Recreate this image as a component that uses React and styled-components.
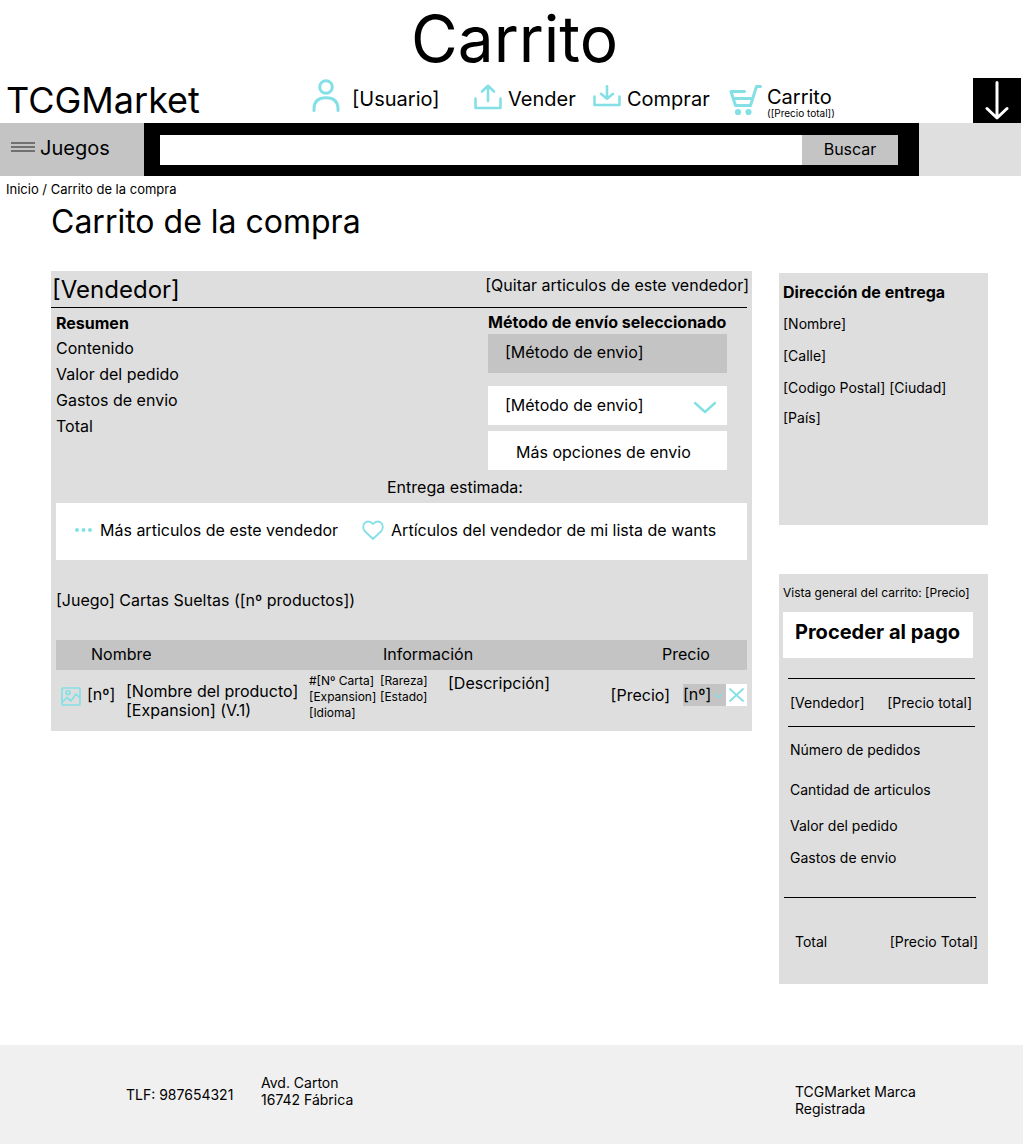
import React from "react";
import styled, { createGlobalStyle } from "styled-components";

const accent = "#85e0e6";
const panel = "#dedede";
const strong = "#c4c4c4";

const GlobalStyle = createGlobalStyle`
  *, *::before, *::after { box-sizing: border-box; }
  body { margin: 0; background: #fff; color: #000; font: 16px/20px Inter, "Liberation Sans", sans-serif; }
  h1, h2, h3, p, ul, address { margin: 0; padding: 0; font-style: normal; }
  h1, h2 { font-weight: 400; }
  ul { list-style: none; }
  a { color: inherit; text-decoration: none; }
  button, input, select { font: inherit; color: inherit; border: 0; border-radius: 0; margin: 0; padding: 0; }
  button { cursor: pointer; }
`;

const Icon = styled.svg`
  display: block;
  flex: none;
  width: ${(p) => p.$w}px;
  height: ${(p) => p.$h}px;
  margin-bottom: ${(p) => p.$lift || 0}px;
  fill: none;
  stroke: ${(p) => p.$color || accent};
  stroke-width: ${(p) => p.$stroke || 3};
  stroke-linecap: round;
  stroke-linejoin: round;
`;

const PageTitle = styled.h1`
  font-size: 64px;
  line-height: 78px;
  text-align: center;
  padding-right: 6px;
`;

const Header = styled.header`
  display: grid;
  grid-template-columns: 312px 1fr 48px;
  grid-template-rows: 45px;
  padding-right: 14px;
`;

const Logo = styled.a`
  padding-left: 6px;
  font-size: 36px;
  line-height: 45px;
`;

const UserNav = styled.nav`
  display: grid;
  grid-template-columns: 162px 119px 136px auto;
  grid-template-rows: 45px;
  justify-content: start;
`;

const NavLink = styled.a`
  display: flex;
  align-items: center;
  gap: ${(p) => p.$gap || 6}px;
  font-size: 20px;
  line-height: 22px;
  white-space: nowrap;
  padding-bottom: 3px;
`;

const CartText = styled.span`
  display: block;
  padding-top: 6px;
`;

const CartTotal = styled.small`
  display: block;
  font-size: 10px;
  line-height: 10px;
`;

const DownButton = styled.button`
  display: grid;
  place-items: center;
  background: #000;
`;

const SearchBar = styled.div`
  display: flex;
  height: 53px;
  margin-right: 14px;
  background: #dfdfdf;
`;

const GamesButton = styled.button`
  display: flex;
  align-items: center;
  gap: 5px;
  width: 144px;
  padding: 0 0 4px 11px;
  background: ${strong};
  font-size: 20px;
`;

const SearchForm = styled.form`
  display: flex;
  flex: 1;
  margin-right: 102px;
  padding: 12px 21px 11px 16px;
  background: #000;
`;

const SearchInput = styled.input`
  flex: 1;
  min-width: 0;
  background: #fff;
  padding: 0 8px;
`;

const SearchButton = styled.button`
  width: 96px;
  padding-bottom: 2px;
  background: ${strong};
`;

const Breadcrumb = styled.nav`
  padding: 3px 6px;
  font-size: 13px;
`;

const Heading = styled.h2`
  padding-left: 51px;
  font-size: 32px;
  line-height: 40px;
`;

const Main = styled.main`
  display: flex;
  align-items: flex-start;
  gap: 27px;
  padding: 29px 47px 61px 51px;
`;

const SellerPanel = styled.section`
  flex: 1;
  min-width: 0;
  padding-right: 5px;
  background: ${panel};
`;

const SellerHeader = styled.div`
  display: flex;
  justify-content: space-between;
  height: 37px;
  border-bottom: 1px solid #000;
`;

const SellerName = styled.h2`
  padding-left: 1px;
  font-size: 24px;
  line-height: 37px;
`;

const TextButton = styled.button`
  height: 28px;
  margin-right: -2px;
  background: none;
`;

const SellerBody = styled.div`
  padding-left: 5px;
`;

const Details = styled.div`
  display: flex;
  justify-content: space-between;
  padding: 3px 20px 0 0;
`;

const BoldTitle = styled.h3`
  font-size: 16px;
  font-weight: 700;
  line-height: ${(p) => p.$line}px;
`;

const SummaryItem = styled.li`
  line-height: 26px;
`;

const Shipping = styled.div`
  width: 239px;
  margin-top: -1px;
`;

const Selected = styled.p`
  height: 39px;
  margin-bottom: 13px;
  padding-left: 17px;
  background: ${strong};
  line-height: 37px;
`;

const SelectWrap = styled.div`
  position: relative;
  width: ${(p) => p.$w};
  height: ${(p) => p.$h}px;
  svg {
    position: absolute;
    top: ${(p) => p.$top}px;
    right: ${(p) => p.$right}px;
    pointer-events: none;
  }
`;

const Select = styled.select`
  appearance: none;
  display: block;
  width: 100%;
  height: 100%;
  padding: 0 0 ${(p) => p.$bottom || 0}px ${(p) => p.$left || 0}px;
  background: ${(p) => p.$bg};
`;

const MoreOptions = styled.button`
  width: 100%;
  height: 39px;
  margin-top: 6px;
  padding: 3px 0 0 28px;
  background: #fff;
  text-align: left;
`;

const Estimate = styled.p`
  padding: 7px 0 6px 331px;
`;

const SellerLinks = styled.nav`
  display: flex;
  align-items: center;
  gap: 24px;
  height: 57px;
  padding: 0 18px 4px;
  background: #fff;
`;

const SellerLink = styled.a`
  display: flex;
  align-items: center;
  gap: 7px;
  white-space: nowrap;
`;

const GroupTitle = styled.p`
  padding: 30px 0;
`;

const Table = styled.table`
  width: 100%;
  table-layout: fixed;
  border-collapse: collapse;
`;

const HeadCell = styled.th`
  width: ${(p) => p.$w || "auto"};
  height: 30px;
  padding: 0 0 2px ${(p) => p.$left}px;
  background: ${strong};
  font-weight: 400;
  text-align: left;
`;

const Cell = styled.td`
  height: 61px;
  padding: 0;
  vertical-align: top;
`;

const Product = styled.div`
  display: flex;
  padding: 12px 0 0 5px;
`;

const Thumb = styled.div`
  padding-top: 5px;
`;

const Count = styled.span`
  width: 39px;
  margin-left: 6px;
  line-height: 24px;
`;

const ProductName = styled.span`
  line-height: 19px;
  white-space: nowrap;
`;

const Info = styled.div`
  display: grid;
  grid-template-columns: 71px 68px 1fr;
  padding-top: 3px;
`;

const Small = styled.p`
  font-size: 12px;
  line-height: 16px;
  white-space: nowrap;
`;

const Price = styled.div`
  display: flex;
  align-items: center;
  justify-content: flex-end;
  padding-top: 14px;
`;

const PriceText = styled.span`
  margin-right: 13px;
`;

const RemoveButton = styled.button`
  display: grid;
  place-items: center;
  width: 21px;
  height: 22px;
  background: #fff;
`;

const Sidebar = styled.aside`
  flex: none;
  width: 209px;
  padding-top: 2px;
  font-size: 14px;
`;

const AddressPanel = styled.section`
  height: 252px;
  margin-bottom: 49px;
  padding: 3px 4px;
  background: ${panel};
`;

const Address = styled.address`
  display: grid;
  grid-template-rows: repeat(3, 32px) 28px;
  align-items: center;
`;

const CartPanel = styled.section`
  padding: 11px 5px 32px 4px;
  background: ${panel};
`;

const PayButton = styled.button`
  width: 190px;
  height: 46px;
  margin: 11px 0 20px;
  padding: 0 0 6px 12px;
  background: #fff;
  font-size: 20px;
  font-weight: 700;
  text-align: left;
  white-space: nowrap;
`;

const SellerTotal = styled.div`
  display: flex;
  justify-content: space-between;
  margin: 0 8px 0 5px;
  padding: 14px 3px 13px 2px;
  border: solid #000;
  border-width: 1px 0;
`;

const Totals = styled.ul`
  display: grid;
  grid-template-rows: 40px 40px 32px 32px;
  align-items: center;
  padding: 3px 7px 23px;
`;

const GrandTotal = styled.div`
  display: flex;
  justify-content: space-between;
  padding: 34px 0 0 11px;
  margin: 0 7px 0 1px;
  border-top: 1px solid #000;
  white-space: nowrap;
`;

const GrandPrice = styled.span`
  margin-right: -2px;
`;

const Footer = styled.footer`
  display: grid;
  grid-template-columns: 135px 1fr 150px;
  align-items: center;
  height: 99px;
  margin-right: 12px;
  padding: 0 78px 0 126px;
  background: #f0f0f0;
  font-size: 14px;
  line-height: 17px;
`;

const FooterText = styled.p`
  padding-top: ${(p) => p.$top || 0}px;
  padding-bottom: ${(p) => p.$bottom || 0}px;
`;

export default function App() {
  return (
    <>
      <GlobalStyle />
      <PageTitle>Carrito</PageTitle>
      <Header>
        <Logo href="#">TCGMarket</Logo>
        <UserNav aria-label="Usuario">
          <NavLink href="#" $gap={12}>
            <Icon $w={28} $h={36} $lift={6} viewBox="0 0 28 36">
              <circle cx="14" cy="9" r="6.3" />
              <path d="M2 32.5V31C2 23.500 6.500 19.800 14 19.800S26 23.500 26 31v1.500" />
            </Icon>
            [Usuario]
          </NavLink>
          <NavLink href="#">
            <Icon $w={28} $h={26} $lift={4} viewBox="0 0 28 26" $stroke={2.6}>
              <path d="M1.5 14.5V24h25V14.500M14 17V2M8 7.5L14 1.8l6 5.7" />
            </Icon>
            Vender
          </NavLink>
          <NavLink href="#">
            <Icon $w={28} $h={26} $lift={4} viewBox="0 0 28 26" $stroke={2.6}>
              <path d="M1.5 12.5V21h25V12.500M14 2.3V14.800M8 9.8l6 5 6-5" />
            </Icon>
            Comprar
          </NavLink>
          <NavLink href="#" $gap={5}>
            <Icon $w={33} $h={34} viewBox="0 0 33 34" $stroke={3}>
              <path d="M15.5 9.500H2L6.500 23.500H21.500L27.500 4.500H31.500M4.500 16.500H22" />
              <circle cx="9" cy="30" r="1.6" />
              <circle cx="19.5" cy="30" r="1.6" />
            </Icon>
            <CartText>
              Carrito
              <CartTotal>([Precio total])</CartTotal>
            </CartText>
          </NavLink>
        </UserNav>
        <DownButton aria-label="Bajar">
          <Icon $w={24} $h={40} viewBox="0 0 24 40" $color="#fff">
            <path d="M12 1.5v35M2 27.500l10 9.500L22 27.500" />
          </Icon>
        </DownButton>
      </Header>
      <SearchBar>
        <GamesButton>
          <Icon $w={24} $h={12} $lift={2} viewBox="0 0 24 12" $color="#555" $stroke={1.6}>
            <path strokeLinecap="butt" d="M0 2h24M0 6h24M0 10h24" />
          </Icon>
          Juegos
        </GamesButton>
        <SearchForm onSubmit={(e) => e.preventDefault()}>
          <SearchInput type="search" aria-label="Buscar cartas" />
          <SearchButton>Buscar</SearchButton>
        </SearchForm>
      </SearchBar>
      <Breadcrumb aria-label="Ruta">
        <a href="#">Inicio</a> / <a href="#">Carrito de la compra</a>
      </Breadcrumb>
      <Heading>Carrito de la compra</Heading>
      <Main>
        <SellerPanel>
          <SellerHeader>
            <SellerName>[Vendedor]</SellerName>
            <TextButton>[Quitar articulos de este vendedor]</TextButton>
          </SellerHeader>
          <SellerBody>
            <Details>
              <div>
                <BoldTitle $line={24}>Resumen</BoldTitle>
                <ul>
                  <SummaryItem>Contenido</SummaryItem>
                  <SummaryItem>Valor del pedido</SummaryItem>
                  <SummaryItem>Gastos de envio</SummaryItem>
                  <SummaryItem>Total</SummaryItem>
                </ul>
              </div>
              <Shipping>
                <BoldTitle $line={24}>Método de envío seleccionado</BoldTitle>
                <Selected>[Método de envio]</Selected>
                <SelectWrap $w="100%" $h={39} $top={14} $right={10}>
                  <Select aria-label="Método de envio" $bg="#fff" $left={17} $bottom={2}>
                    <option>[Método de envio]</option>
                  </Select>
                  <Icon $w={24} $h={14} viewBox="0 0 24 14" $stroke={2.4}>
                    <path d="M2 3l10 9 10-9" />
                  </Icon>
                </SelectWrap>
                <MoreOptions>Más opciones de envio</MoreOptions>
              </Shipping>
            </Details>
            <Estimate>Entrega estimada:</Estimate>
            <SellerLinks aria-label="Artículos del vendedor">
              <SellerLink href="#">
                <Icon $w={19} $h={6} viewBox="0 0 19 6" $stroke={4}>
                  <path d="M3 3h0M9.500 3h0M16 3h0" />
                </Icon>
                Más articulos de este vendedor
              </SellerLink>
              <SellerLink href="#">
                <Icon $w={22} $h={20} viewBox="0 0 22 20" $stroke={1.8}>
                  <path d="M11 19L2.600 11C.6 8.600.8 4.800 2.800 2.800 5 .800 8.600 1 11 4c2.400-3 6-3.200 8.200-1.200 2 2 2.200 5.800.2 8.200z" />
                </Icon>
                Artículos del vendedor de mi lista de wants
              </SellerLink>
            </SellerLinks>
            <GroupTitle>[Juego] Cartas Sueltas ([nº productos])</GroupTitle>
            <Table>
              <thead>
                <tr>
                  <HeadCell $w="253px" $left={35}>Nombre</HeadCell>
                  <HeadCell $left={74}>Información</HeadCell>
                  <HeadCell $w="147px" $left={62}>Precio</HeadCell>
                </tr>
              </thead>
              <tbody>
                <tr>
                  <Cell>
                    <Product>
                      <Thumb>
                        <Icon $w={20} $h={19} viewBox="0 0 20 19" $stroke={1.7}>
                          <rect x="1" y="1" width="18" height="17" rx="1" />
                          <circle cx="7" cy="5.500" r="2" />
                          <path d="M1.500 15l4.500-4.500 4 3.500 5-7 4 4" />
                        </Icon>
                      </Thumb>
                      <Count>[nº]</Count>
                      <ProductName>
                        [Nombre del producto]
                        <br />
                        [Expansion] (V.1)
                      </ProductName>
                    </Product>
                  </Cell>
                  <Cell>
                    <Info>
                      <div>
                        <Small>#[Nº Carta]</Small>
                        <Small>[Expansion]</Small>
                        <Small>[Idioma]</Small>
                      </div>
                      <div>
                        <Small>[Rareza]</Small>
                        <Small>[Estado]</Small>
                      </div>
                      <p>[Descripción]</p>
                    </Info>
                  </Cell>
                  <Cell>
                    <Price>
                      <PriceText>[Precio]</PriceText>
                      <SelectWrap $w="43px" $h={22} $top={9} $right={3}>
                        <Select aria-label="Cantidad" $bg={strong} $bottom={2}>
                          <option>[nº]</option>
                        </Select>
                        <Icon $w={9} $h={6} viewBox="0 0 9 6" $stroke={1.4}>
                          <path d="M1 1l3.500 3.500L8 1" />
                        </Icon>
                      </SelectWrap>
                      <RemoveButton aria-label="Quitar">
                        <Icon $w={15} $h={14} viewBox="0 0 15 14" $stroke={1.8}>
                          <path d="M1 1l13 12M14 1L1 13" />
                        </Icon>
                      </RemoveButton>
                    </Price>
                  </Cell>
                </tr>
              </tbody>
            </Table>
          </SellerBody>
        </SellerPanel>
        <Sidebar>
          <AddressPanel>
            <BoldTitle $line={32}>Dirección de entrega</BoldTitle>
            <Address>
              <span>[Nombre]</span>
              <span>[Calle]</span>
              <span>[Codigo Postal] [Ciudad]</span>
              <span>[País]</span>
            </Address>
          </AddressPanel>
          <CartPanel>
            <Small>Vista general del carrito: [Precio]</Small>
            <PayButton>Proceder al pago</PayButton>
            <SellerTotal>
              <span>[Vendedor]</span>
              <span>[Precio total]</span>
            </SellerTotal>
            <Totals>
              <li>Número de pedidos</li>
              <li>Cantidad de articulos</li>
              <li>Valor del pedido</li>
              <li>Gastos de envio</li>
            </Totals>
            <GrandTotal>
              <span>Total</span>
              <GrandPrice>[Precio Total]</GrandPrice>
            </GrandTotal>
          </CartPanel>
        </Sidebar>
      </Main>
      <Footer>
        <FooterText>TLF: 987654321</FooterText>
        <FooterText $bottom={8}>
          Avd. Carton
          <br />
          16742 Fábrica
        </FooterText>
        <FooterText $top={10}>
          TCGMarket Marca
          <br />
          Registrada
        </FooterText>
      </Footer>
    </>
  );
}
